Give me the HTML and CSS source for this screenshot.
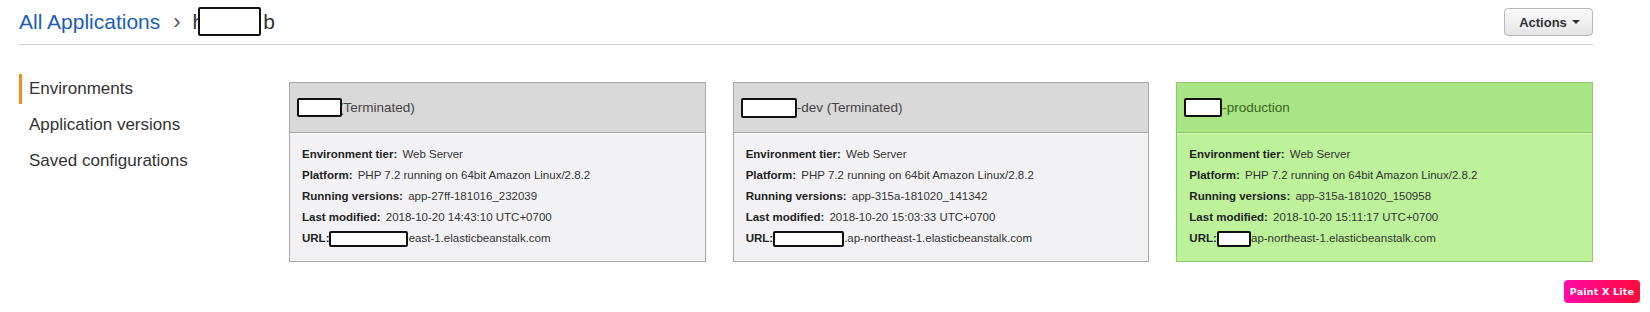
FILE: index.html
```html
<!DOCTYPE html>
<html lang="en">
<head>
    <meta charset="UTF-8">
    <title>Elastic Beanstalk - Application</title>
    <link rel="stylesheet" href="styles.css">
</head>
<body>
    <div class="page">
        <header class="topbar">
            <nav class="crumbs">
                <a href="#" class="crumb-link">All Applications</a>
                <span class="sep">›</span>
                <span class="app-name">h<span class="redact crumb-redact"></span>b</span>
            </nav>
            <button class="actions" type="button">Actions<span class="caret"></span></button>
        </header>

        <div class="main">
            <ul class="side">
                <li class="side-item active">Environments</li>
                <li class="side-item">Application versions</li>
                <li class="side-item">Saved configurations</li>
            </ul>

            <div class="envs">
                <div class="env">
                    <div class="env-head"><span class="redact r45"></span><span class="cut">(Terminated)</span></div>
                    <div class="env-body">
                        <div class="row"><b>Environment tier:</b> Web Server</div>
                        <div class="row"><b>Platform:</b> PHP 7.2 running on 64bit Amazon Linux/2.8.2</div>
                        <div class="row"><b>Running versions:</b> app-27ff-181016_232039</div>
                        <div class="row"><b>Last modified:</b> 2018-10-20 14:43:10 UTC+0700</div>
                        <div class="row"><b class="url">URL:</b><span class="redact small r79"></span><span class="cut">.east-1.elasticbeanstalk.com</span></div>
                    </div>
                </div>

                <div class="env">
                    <div class="env-head"><span class="redact r56"></span><span>-dev (Terminated)</span></div>
                    <div class="env-body">
                        <div class="row"><b>Environment tier:</b> Web Server</div>
                        <div class="row"><b>Platform:</b> PHP 7.2 running on 64bit Amazon Linux/2.8.2</div>
                        <div class="row"><b>Running versions:</b> app-315a-181020_141342</div>
                        <div class="row"><b>Last modified:</b> 2018-10-20 15:03:33 UTC+0700</div>
                        <div class="row"><b class="url">URL:</b><span class="redact small r71"></span><span>.ap-northeast-1.elasticbeanstalk.com</span></div>
                    </div>
                </div>

                <div class="env healthy">
                    <div class="env-head"><span class="redact r38"></span><span>-production</span></div>
                    <div class="env-body">
                        <div class="row"><b>Environment tier:</b> Web Server</div>
                        <div class="row"><b>Platform:</b> PHP 7.2 running on 64bit Amazon Linux/2.8.2</div>
                        <div class="row"><b>Running versions:</b> app-315a-181020_150958</div>
                        <div class="row"><b>Last modified:</b> 2018-10-20 15:11:17 UTC+0700</div>
                        <div class="row"><b class="url">URL:</b><span class="redact small r34"></span><span class="cut">.ap-northeast-1.elasticbeanstalk.com</span></div>
                    </div>
                </div>
            </div>
        </div>
    </div>

    <div class="badge">Paint X Lite</div>
</body>
</html>
```

FILE: styles.css
```css
/* Reset */
* {
    margin: 0;
    padding: 0;
    box-sizing: border-box;
}
body {
    font-family: 'Liberation Sans', Arial, sans-serif;
    background: #fff;
    color: #333;
    width: 1650px;
    height: 312px;
    position: relative;
    overflow: hidden;
}
.page {
    width: 1574px;
    margin-left: 19px;
}

/* Top bar */
.topbar {
    height: 45px;
    display: flex;
    align-items: center;
    justify-content: space-between;
    border-bottom: 1px solid #cfcfcf;
    padding-bottom: 1px;
}
.crumbs {
    display: flex;
    align-items: center;
    font-size: 21px;
}
.crumb-link {
    color: #1c5eb6;
    text-decoration: none;
}
.sep {
    color: #555;
    margin: 0 12px 0 13px;
    font-size: 22px;
}
.app-name {
    display: flex;
    align-items: center;
    color: #333;
}
.crumb-redact {
    width: 63px;
    height: 29px;
    margin: 0 2px 0 -6px;
}
.actions {
    width: 89px;
    height: 28px;
    margin-top: 1px;
    border: 1px solid #b8b8b8;
    border-radius: 4px;
    background: linear-gradient(#fbfbfb, #e4e4e4);
    font-family: 'Liberation Sans', Arial, sans-serif;
    font-size: 13px;
    font-weight: 700;
    color: #333;
    display: flex;
    align-items: center;
    justify-content: center;
    padding-left: 2px;
}
.caret {
    display: inline-block;
    margin-left: 5px;
    border-left: 4px solid transparent;
    border-right: 4px solid transparent;
    border-top: 4px solid #333;
}

/* Redaction boxes */
.redact {
    display: inline-block;
    flex: none;
    background: #fff;
    border: 2px solid #111;
    border-radius: 2px;
    position: relative;
    z-index: 1;
}
.r45 { width: 45px; height: 19px; }
.r56 { width: 56px; height: 20px; }
.r38 { width: 38px; height: 19px; }
.redact.small { height: 16px; vertical-align: middle; }
.r79 { width: 79px; }
.r71 { width: 71px; }
.r34 { width: 34px; }
.cut {
    margin-left: -3px;
}

/* Layout */
.main {
    display: flex;
}
.side {
    list-style: none;
    width: 270px;
    flex: none;
    padding-top: 29px;
}
.side-item {
    height: 30px;
    line-height: 30px;
    margin-bottom: 6px;
    padding-left: 7px;
    border-left: 3px solid transparent;
    font-size: 17px;
    color: #333;
}
.side-item.active {
    border-left-color: #f68d1e;
}
.envs {
    flex: 1;
    display: grid;
    grid-template-columns: repeat(3, 1fr);
    gap: 27px;
    padding-top: 37px;
}

/* Environment cards */
.env {
    border: 1px solid #a8a8a8;
    background: #f2f2f4;
}
.env-head {
    height: 50px;
    display: flex;
    align-items: center;
    padding-left: 7px;
    background: #d9d9d9;
    border-bottom: 1px solid #a8a8a8;
    font-size: 13.5px;
    color: #444;
}
.env-body {
    border-top: 1px solid #fbfbfb;
    padding: 10px 12px 12px;
    font-size: 11.5px;
    line-height: 21px;
    color: #333;
}
.row {
    display: flex;
    align-items: center;
    white-space: pre;
}
.row b {
    color: #222;
    margin-right: 2px;
}
.row b.url {
    margin-right: 0;
}
.env.healthy {
    border-color: #8ec66c;
    background: #bdf29b;
}
.healthy .env-head {
    background: #a9e485;
    border-bottom-color: #8ec66c;
    color: #3b6424;
}
.healthy .env-body {
    border-top-color: #d2f8b8;
}

/* Watermark */
.badge {
    position: absolute;
    left: 1564px;
    top: 280px;
    width: 76px;
    height: 23px;
    border-radius: 4px;
    background: linear-gradient(to right, #ff0aa5, #ff0a3a);
    color: #fff;
    font-family: 'DejaVu Sans', sans-serif;
    font-weight: 700;
    font-size: 9.5px;
    line-height: 23px;
    text-align: center;
    letter-spacing: 0.2px;
}
```
